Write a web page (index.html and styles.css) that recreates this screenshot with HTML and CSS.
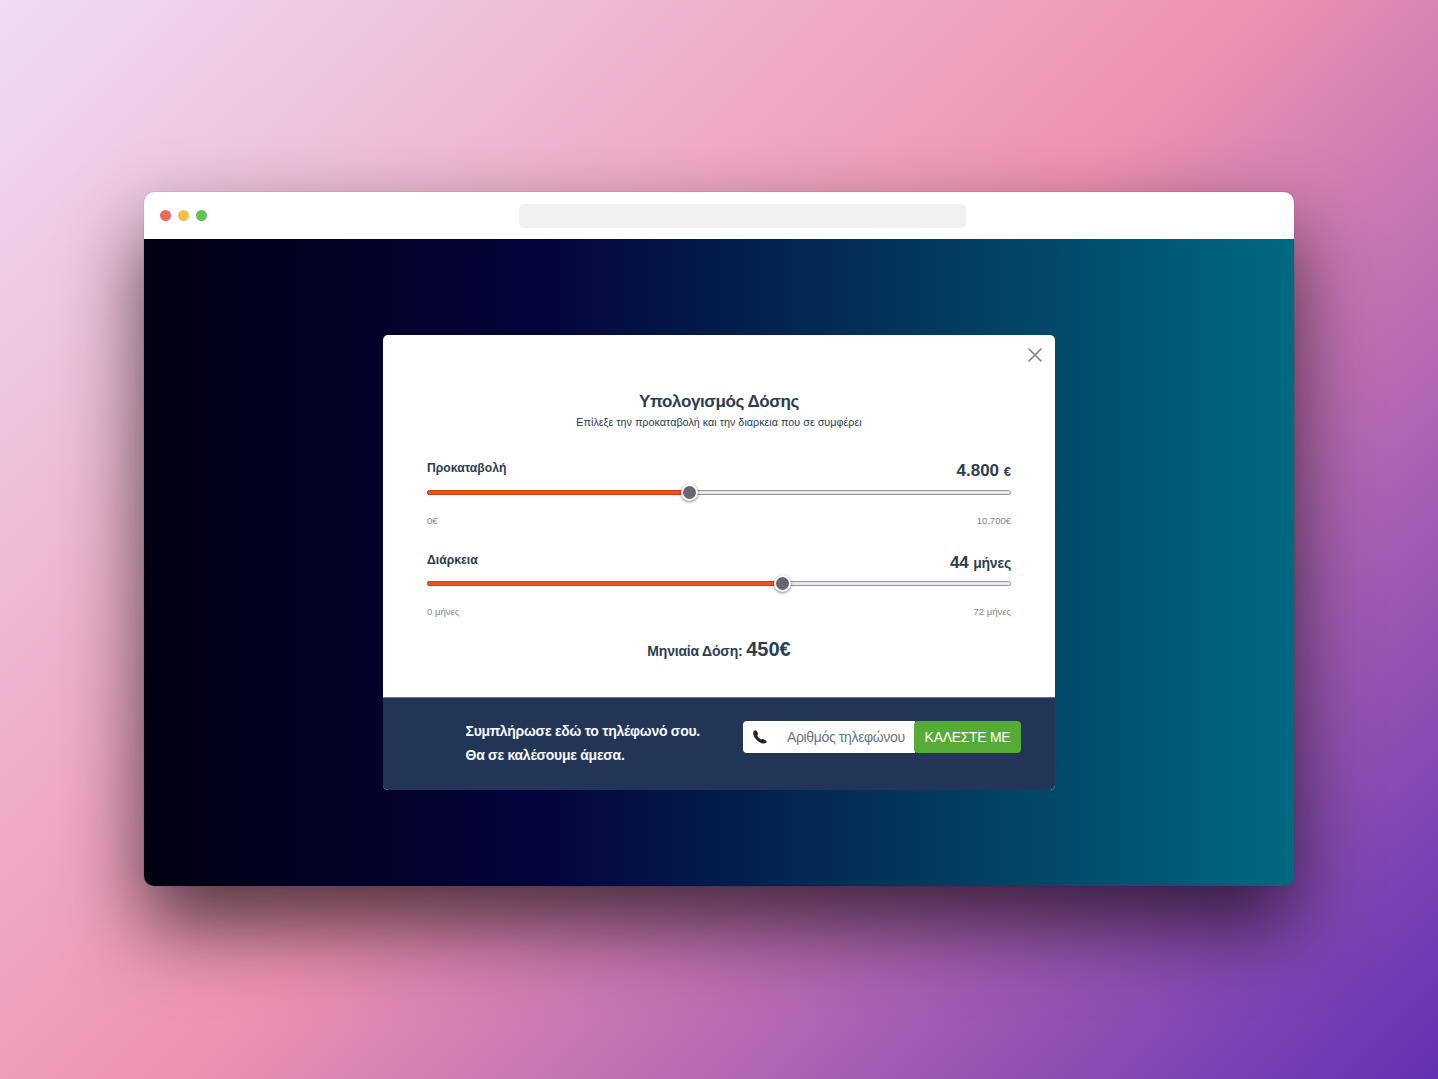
FILE: index.html
```html
<!DOCTYPE html>
<html lang="el">
<head>
<meta charset="utf-8">
<title>Υπολογισμός Δόσης</title>
<link rel="stylesheet" href="styles.css">
</head>
<body>
<div class="window">
  <header class="titlebar">
    <div class="lights"><i class="light red"></i><i class="light yellow"></i><i class="light green"></i></div>
    <div class="address"></div>
  </header>
  <main class="stage">
    <section class="modal">
      <div class="modal-body">
        <button class="close" aria-label="Κλείσιμο"><svg width="14" height="14" viewBox="0 0 14 14"><path d="M1 1 13 13M13 1 1 13" stroke="#808080" stroke-width="1.6" stroke-linecap="round"/></svg></button>
        <h1 class="title">Υπολογισμός Δόσης</h1>
        <p class="subtitle">Επίλεξε την προκαταβολή και την διαρκεια που σε συμφέρει</p>
        <div class="field">
          <div class="row"><span class="label">Προκαταβολή</span><span class="value">4.800 <small class="unit euro">€</small></span></div>
          <div class="track"><div class="fill" style="width:262px"></div><div class="thumb"></div></div>
          <div class="limits"><span>0€</span><span>10.700€</span></div>
        </div>
        <div class="field second">
          <div class="row"><span class="label">Διάρκεια</span><span class="value">44 <small class="unit">μήνες</small></span></div>
          <div class="track"><div class="fill" style="width:355px"></div><div class="thumb"></div></div>
          <div class="limits"><span>0 μήνες</span><span>72 μήνες</span></div>
        </div>
        <p class="total">Μηνιαία Δόση: <span class="amount">450€</span></p>
      </div>
      <footer class="modal-footer">
        <p class="callout">Συμπλήρωσε εδώ το τηλέφωνό σου.<br>Θα σε καλέσουμε άμεσα.</p>
        <div class="call">
          <div class="phone">
            <svg class="phone-icon" width="14" height="14" viewBox="0 0 14 14"><path d="M.9 1.1C1.9.1 3 0 3.7 1L4.8 3.1C5.2 4 4.9 4.7 4.2 5.4C5 7.1 6.4 8.5 8.2 9.5C9 8.8 9.8 8.7 10.5 9.2L12.9 10.6C13.9 11.2 13.9 12 13 12.8C11.6 14 9 13.7 6.5 12.2C4 10.7 1.9 8.4.8 5.8C0 3.8 0 2.1.9 1.1Z" fill="#212529"/></svg>
            <span class="placeholder">Αριθμός τηλεφώνου</span>
          </div>
          <button class="submit">ΚΑΛΕΣΤΕ ΜΕ</button>
        </div>
      </footer>
    </section>
  </main>
</div>
</body>
</html>
```
FILE: styles.css
```css
* { box-sizing: border-box; }
body {
  margin: 0;
  height: 1079px;
  overflow: hidden;
  padding: 192px 144px 193px;
  font-family: "Liberation Sans", Arial, sans-serif;
  color: #2c3e50;
  background: linear-gradient(135deg, #eeddf3 0%, #ee92b1 50%, #6330b4 100%);
}
h1, p { margin: 0; }
button { border: 0; padding: 0; font-family: inherit; }
.window {
  width: 1150px;
  height: 694px;
  border-radius: 10px;
  box-shadow: 0 0 1px rgba(0, 0, 0, .6), 0 40px 80px rgba(0, 0, 0, .66);
}
.titlebar {
  height: 47px;
  background: #fff;
  border-radius: 10px 10px 0 0;
  display: flex;
  align-items: center;
  padding: 1px 0 0 16px;
}
.lights { display: flex; gap: 7px; width: 359px; margin-bottom: 2px; }
.light { width: 11px; height: 11px; border-radius: 50%; }
.red { background: #ed6a5e; }
.yellow { background: #f4bd50; }
.green { background: #61c455; }
.address { width: 447px; height: 24px; border-radius: 5px; background: #f0f0f0; }
.stage {
  height: 647px;
  border-radius: 0 0 10px 10px;
  background: linear-gradient(90deg, #010012 0%, #04043c 35%, #006a80 100%);
  padding: 96px 239px;
}
.modal { height: 455px; border-radius: 5px; overflow: hidden; background: #fff; }
.modal-body { position: relative; height: 362px; padding: 56px 44px 0; }
.close { position: absolute; top: 13px; right: 13px; width: 14px; height: 14px; background: none; display: flex; }
.title { font-size: 17px; line-height: 22px; text-align: center; letter-spacing: -.41px; }
.subtitle { font-size: 10.8px; line-height: 18px; text-align: center; }
.field { margin-top: 27px; height: 68px; }
.second { margin-top: 24px; height: 67px; }
.row { display: flex; justify-content: space-between; height: 32px; }
.second .row { height: 31px; }
.label { font-size: 12.2px; font-weight: bold; line-height: 20px; }
.value { font-size: 17px; font-weight: bold; line-height: 25px; }
.second .value { letter-spacing: -.2px; }
.unit { font-size: 14px; }
.euro { font-size: 13px; }
.track { height: 5px; border: 1px solid #92909f; border-radius: 3px; background: #e9e9ed; display: flex; align-items: center; }
.fill { height: 5px; flex: none; margin-left: -1px; border: 1px solid #ca400f; border-radius: 3px 0 0 3px; background: #e9541f; }
.thumb { width: 17px; height: 17px; flex: none; margin-left: -8px; border: 2px solid #fff; border-radius: 50%; background: #676774; box-shadow: 0 1px 3px rgba(0, 0, 0, .5); }
.limits { display: flex; justify-content: space-between; margin-top: 19px; font-size: 9.5px; line-height: 14px; color: #808489; }
.total { margin-top: 18px; font-size: 14px; font-weight: bold; line-height: 28px; text-align: center; letter-spacing: -.2px; }
.amount { font-size: 20px; letter-spacing: 0; }
.modal-footer { height: 93px; border-top: 1px solid #6c7b8c; background: #223556; display: flex; align-items: flex-start; padding: 21px 34px 0 82px; }
.callout { width: 278px; padding-left: .5px; color: #f8f9fa; font-size: 14px; font-weight: bold; line-height: 24px; letter-spacing: -.26px; white-space: nowrap; }
.call { display: flex; padding-top: 2px; }
.phone { width: 172px; height: 32px; margin-right: -1px; border-radius: 4px 0 0 4px; background: #fff; display: flex; flex: none; align-items: center; padding: 0 10px; }
.phone-icon { flex: none; margin-right: 20px; }
.placeholder { overflow: hidden; width: 118px; flex: none; white-space: nowrap; font-size: 14px; line-height: 20px; color: #6c757d; letter-spacing: -.35px; }
.submit { position: relative; width: 107px; height: 32px; flex: none; border-radius: 4px; background: #56ab37; color: #fff; font-size: 14px; letter-spacing: -.3px; }
```
